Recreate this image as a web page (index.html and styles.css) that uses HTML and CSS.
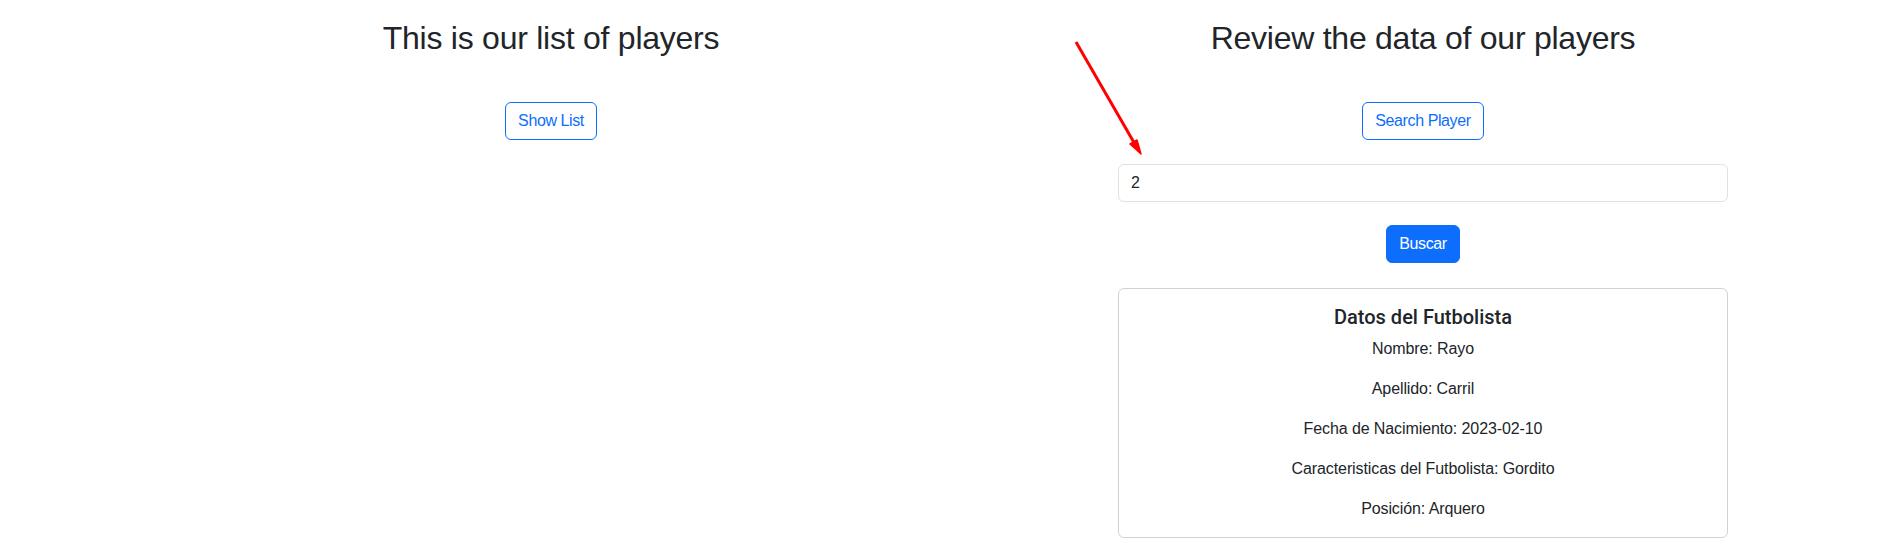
FILE: index.html
```html
<!DOCTYPE html>
<html lang="en">
<head>
<meta charset="utf-8">
<title>Players</title>
<link rel="stylesheet" href="styles.css">
</head>
<body>
<div class="page">
  <section class="col">
    <h2 class="heading">This is our list of players</h2>
    <button class="btn btn-outline">Show List</button>
  </section>
  <section class="col">
    <h2 class="heading">Review the data of our players</h2>
    <button class="btn btn-outline">Search Player</button>
    <div class="form">
      <input class="input" type="text" value="2">
      <button class="btn btn-primary">Buscar</button>
      <div class="card">
        <h5 class="card-title">Datos del Futbolista</h5>
        <p>Nombre: Rayo</p>
        <p>Apellido: Carril</p>
        <p>Fecha de Nacimiento: 2023-02-10</p>
        <p>Caracteristicas del Futbolista: Gordito</p>
        <p>Posición: Arquero</p>
      </div>
    </div>
  </section>
</div>
<svg class="arrow" width="90" height="130" viewBox="0 0 90 130">
  <line x1="2" y1="2" x2="62" y2="106" stroke="#ff0000" stroke-width="3"/>
  <polygon points="67,114 56,104 63,100" fill="#ff0000" stroke="#ff0000" stroke-width="1.5" stroke-linejoin="round"/>
</svg>
</body>
</html>
```

FILE: styles.css
```css
* { box-sizing: border-box; }
html, body { margin: 0; padding: 0; background: #fff; }
body {
  font-family: "Liberation Sans", Arial, sans-serif;
  font-size: 16px;
  line-height: 1.5;
  color: #212529;
}
.page {
  display: flex;
  padding-left: 115px;
  padding-top: 19px;
}
.col {
  width: 872px;
  display: flex;
  flex-direction: column;
  align-items: center;
  text-align: center;
}
.heading {
  margin: 0 0 45px;
  font-size: 32px;
  font-weight: 400;
  line-height: 1.2;
  letter-spacing: -0.25px;
}
.btn {
  font-family: inherit;
  font-size: 16px;
  line-height: 1.5;
  padding: 6px 12px;
  border-radius: 6px;
  border: 1px solid #0d6efd;
  letter-spacing: -0.4px;
  cursor: pointer;
}
.btn-outline { background: #fff; color: #0d6efd; }
.btn-primary { background: #0d6efd; color: #fff; margin-top: 23px; }
.form {
  width: 610px;
  margin-top: 24px;
  display: flex;
  flex-direction: column;
  align-items: center;
}
.input {
  width: 100%;
  font-family: inherit;
  font-size: 16px;
  line-height: 1.5;
  padding: 6px 12px;
  border: 1px solid #dee2e6;
  border-radius: 6px;
  color: #212529;
}
.card {
  width: 100%;
  margin-top: 25px;
  border: 1px solid rgba(0,0,0,0.175);
  border-radius: 6px;
  padding: 16px;
}
.card-title {
  margin: 0 0 8px;
  font-family: Roboto, "Liberation Sans", sans-serif;
  font-size: 20px;
  font-weight: 500;
  line-height: 1.2;
}
.card p { margin: 0 0 16px; letter-spacing: -0.1px; }
.card p:last-child { margin-bottom: 0; }
.arrow {
  position: absolute;
  left: 1074px;
  top: 40px;
}
```
